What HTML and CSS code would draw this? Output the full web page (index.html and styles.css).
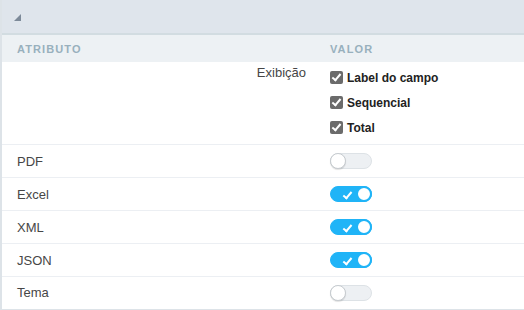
FILE: index.html
```html
<!DOCTYPE html>
<html lang="pt">
<head>
    <meta charset="UTF-8">
    <title>Atributos</title>
    <link rel="stylesheet" href="styles.css">
</head>
<body>
<div class="panel">
    <div class="panel-top">
        <span class="corner"></span>
    </div>

    <div class="row head">
        <div class="cell attr">Atributo</div>
        <div class="cell value">Valor</div>
    </div>

    <!-- Exibição -->
    <div class="row tall">
        <div class="cell attr right">Exibição</div>
        <div class="cell value options">
            <label class="opt"><span class="check"></span>Label do campo</label>
            <label class="opt"><span class="check"></span>Sequencial</label>
            <label class="opt"><span class="check"></span>Total</label>
        </div>
    </div>

    <div class="row">
        <div class="cell attr">PDF</div>
        <div class="cell value"><span class="switch"></span></div>
    </div>
    <div class="row">
        <div class="cell attr">Excel</div>
        <div class="cell value"><span class="switch on"></span></div>
    </div>
    <div class="row">
        <div class="cell attr">XML</div>
        <div class="cell value"><span class="switch on"></span></div>
    </div>
    <div class="row">
        <div class="cell attr">JSON</div>
        <div class="cell value"><span class="switch on"></span></div>
    </div>
    <div class="row last">
        <div class="cell attr">Tema</div>
        <div class="cell value"><span class="switch"></span></div>
    </div>
</div>
</body>
</html>
```

FILE: styles.css
```css
body {
    margin: 0;
    font-family: "Liberation Sans", Arial, sans-serif;
    color: #464646;
    background: #fff;
}
.panel {
    width: 524px;
    border-left: 2px solid #dde3e8;
    box-sizing: border-box;
}
.panel-top {
    height: 33px;
    background: #dfe5ec;
    border-bottom: 2px solid #d2dce1;
    position: relative;
}
.corner {
    position: absolute;
    left: 12px;
    top: 14px;
    width: 0;
    height: 0;
    border-left: 7px solid transparent;
    border-bottom: 7px solid #7d8a99;
}
.row {
    display: grid;
    grid-template-columns: 326px 1fr;
    height: 33px;
    border-bottom: 1px solid #eceff3;
    box-sizing: border-box;
    align-items: center;
}
.row.head {
    height: 27px;
    background: #edf1f4;
    border-bottom: 0;
}
.row.head .cell {
    font-size: 11px;
    font-weight: bold;
    letter-spacing: 1.1px;
    text-transform: uppercase;
    color: #98b0bd;
}
.row.tall {
    height: 83px;
    align-items: start;
}
.row.last {
    border-bottom: 2px solid #dde3e8;
    height: 34px;
    padding-bottom: 1px;
}
.cell.attr {
    padding-left: 15px;
    font-size: 13px;
}
.cell.attr.right {
    text-align: right;
    padding-right: 22px;
    padding-top: 3px;
}
.cell.value {
    padding-left: 2px;
}
.options {
    padding-top: 3px;
}
.opt {
    display: flex;
    align-items: center;
    height: 25px;
    font-size: 12px;
    font-weight: bold;
    color: #222;
}
.check {
    width: 13px;
    height: 13px;
    margin-right: 4px;
    background: #6b6b6b;
    border-radius: 2px;
    position: relative;
}
.check::after {
    content: "";
    position: absolute;
    left: 4px;
    top: 1px;
    width: 3px;
    height: 7px;
    border: solid #fff;
    border-width: 0 2px 2px 0;
    transform: rotate(40deg);
}

/* Přepínače */
.switch {
    display: block;
    width: 42px;
    height: 16px;
    border-radius: 9px;
    background: #edf0f3;
    border: 1px solid #dde2e6;
    box-sizing: border-box;
    position: relative;
}
.switch::before {
    content: "";
    position: absolute;
    left: -1px;
    top: -1px;
    width: 16px;
    height: 16px;
    border-radius: 50%;
    background: #fff;
    border: 1px solid #c6cbcf;
    box-sizing: border-box;
    box-shadow: 0 1px 1px rgba(0,0,0,0.12);
}
.switch.on {
    background: #20b4f7;
    border-color: #20b4f7;
}
.switch.on::before {
    left: auto;
    right: -1px;
    border: 2px solid #20b4f7;
    box-shadow: none;
}
.switch.on::after {
    content: "";
    position: absolute;
    left: 14px;
    top: 3px;
    width: 3px;
    height: 7px;
    border: solid #fff;
    border-width: 0 2px 2px 0;
    transform: rotate(40deg);
}
```
